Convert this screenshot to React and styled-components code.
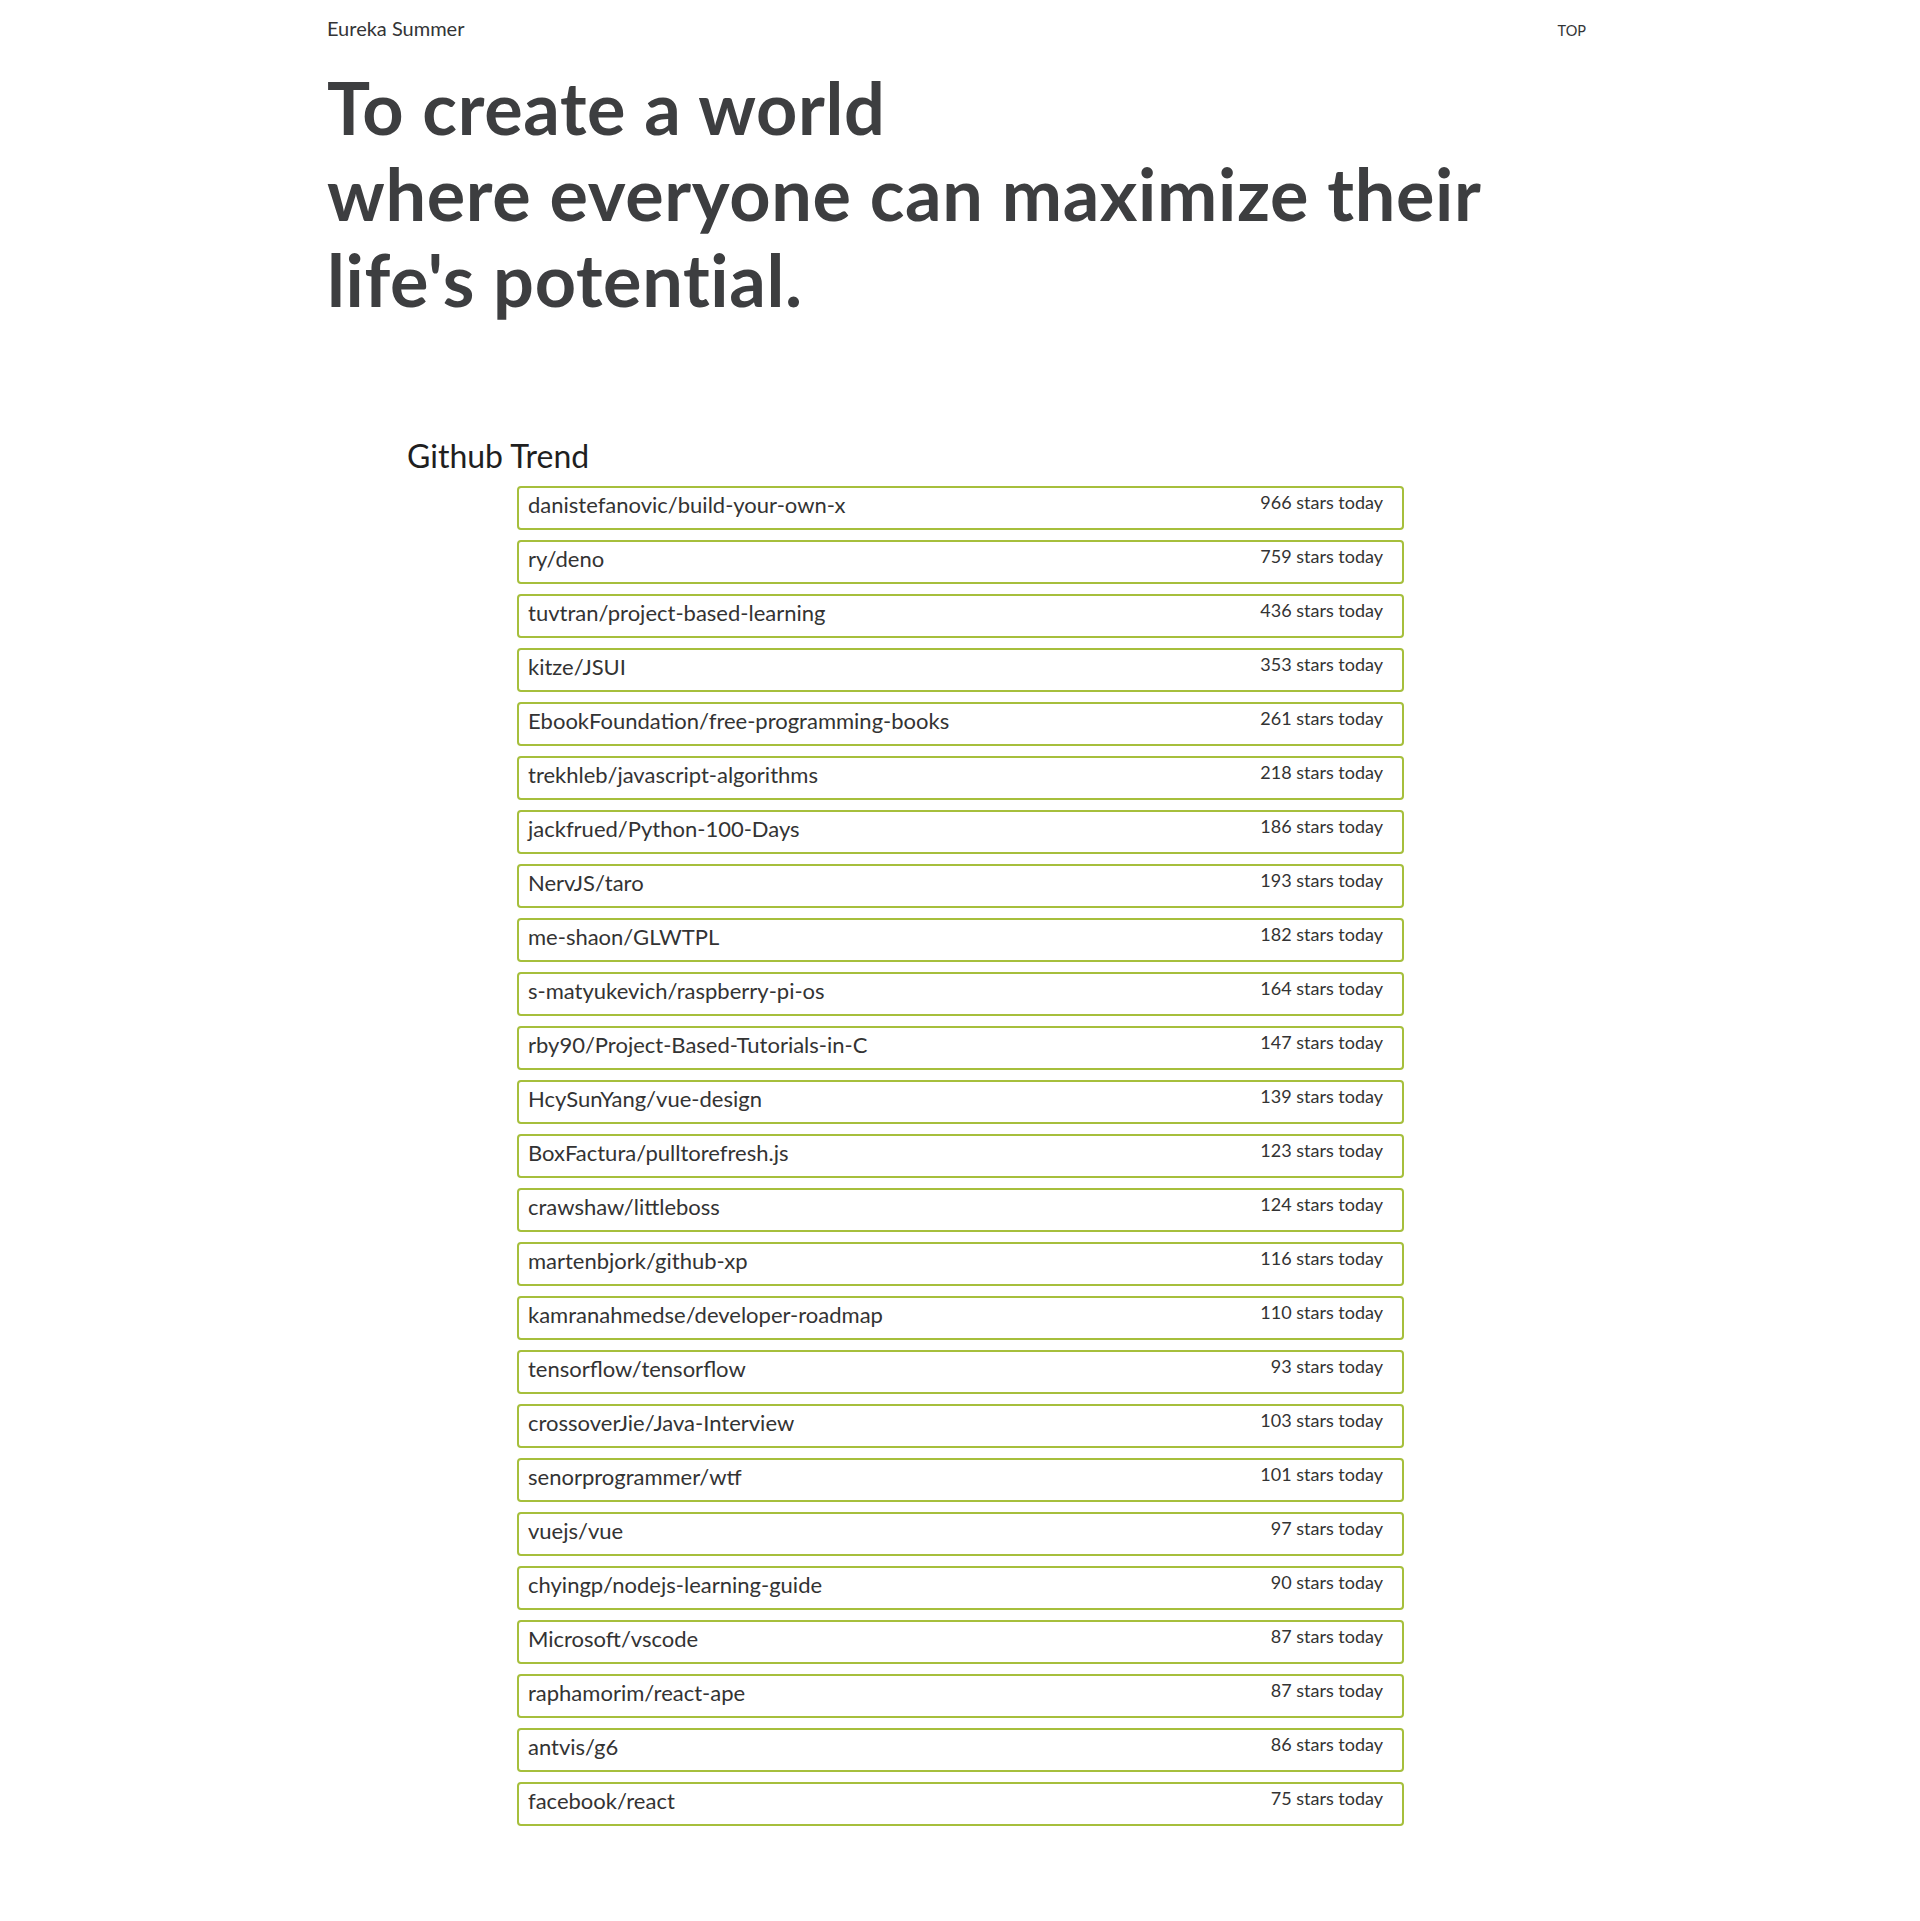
import React from "react";
import styled, { createGlobalStyle } from "styled-components";

const GlobalStyle = createGlobalStyle`
  html, body {
    margin: 0;
    padding: 0;
    background: #ffffff;
  }
  body {
    font-family: Lato, "Open Sans", "Liberation Sans", sans-serif;
    color: #333333;
  }
`;

const Page = styled.div`
  width: 1266px;
  margin: 0 auto;
  padding-bottom: 95px;
`;

const TopBar = styled.header`
  display: flex;
  justify-content: space-between;
  align-items: baseline;
  padding-top: 17px;
`;

const Brand = styled.div`
  font-size: 20px;
  line-height: 22px;
  color: #333436;
`;

const TopLink = styled.a`
  font-size: 14.5px;
  line-height: 22px;
  color: #333436;
  text-decoration: none;
  text-transform: uppercase;
  margin-right: 7px;
`;

const Headline = styled.h1`
  margin: 22px 0 0;
  font-size: 72px;
  line-height: 86px;
  font-weight: 700;
  letter-spacing: 0.65px;
  color: #3d3e40;
`;

const Section = styled.section`
  margin-top: 116px;
  padding-left: 80px;
`;

const SectionTitle = styled.h2`
  margin: 0 0 12px;
  font-size: 32px;
  line-height: 36px;
  font-weight: 400;
  color: #1f1f1f;
`;

const RepoList = styled.ul`
  list-style: none;
  margin: 0 0 0 110px;
  padding: 0;
  width: 887px;
  display: flex;
  flex-direction: column;
  gap: 10px;
`;

const RepoItem = styled.li`
  box-sizing: border-box;
  height: 44px;
  border: 2px solid #a6bf3c;
  border-radius: 4px;
  display: flex;
  justify-content: space-between;
  align-items: flex-start;
  padding: 0 19px 0 9px;
`;

const RepoName = styled.span`
  font-size: 22px;
  line-height: 34px;
  color: #333333;
`;

const Stars = styled.span`
  font-size: 18px;
  line-height: 20px;
  margin-top: 4px;
  color: #333333;
`;

const repos = [
  ["danistefanovic/build-your-own-x", 966],
  ["ry/deno", 759],
  ["tuvtran/project-based-learning", 436],
  ["kitze/JSUI", 353],
  ["EbookFoundation/free-programming-books", 261],
  ["trekhleb/javascript-algorithms", 218],
  ["jackfrued/Python-100-Days", 186],
  ["NervJS/taro", 193],
  ["me-shaon/GLWTPL", 182],
  ["s-matyukevich/raspberry-pi-os", 164],
  ["rby90/Project-Based-Tutorials-in-C", 147],
  ["HcySunYang/vue-design", 139],
  ["BoxFactura/pulltorefresh.js", 123],
  ["crawshaw/littleboss", 124],
  ["martenbjork/github-xp", 116],
  ["kamranahmedse/developer-roadmap", 110],
  ["tensorflow/tensorflow", 93],
  ["crossoverJie/Java-Interview", 103],
  ["senorprogrammer/wtf", 101],
  ["vuejs/vue", 97],
  ["chyingp/nodejs-learning-guide", 90],
  ["Microsoft/vscode", 87],
  ["raphamorim/react-ape", 87],
  ["antvis/g6", 86],
  ["facebook/react", 75],
];

export default function App() {
  return (
    <>
      <GlobalStyle />
      <Page>
        <TopBar>
          <Brand>Eureka Summer</Brand>
          <TopLink href="#">Top</TopLink>
        </TopBar>
        <Headline>
          To create a world
          <br />
          where everyone can maximize their
          <br />
          life's potential.
        </Headline>
        <Section>
          <SectionTitle>Github Trend</SectionTitle>
          <RepoList>
            {repos.map(([name, stars]) => (
              <RepoItem key={name}>
                <RepoName>{name}</RepoName>
                <Stars>{stars} stars today</Stars>
              </RepoItem>
            ))}
          </RepoList>
        </Section>
      </Page>
    </>
  );
}
